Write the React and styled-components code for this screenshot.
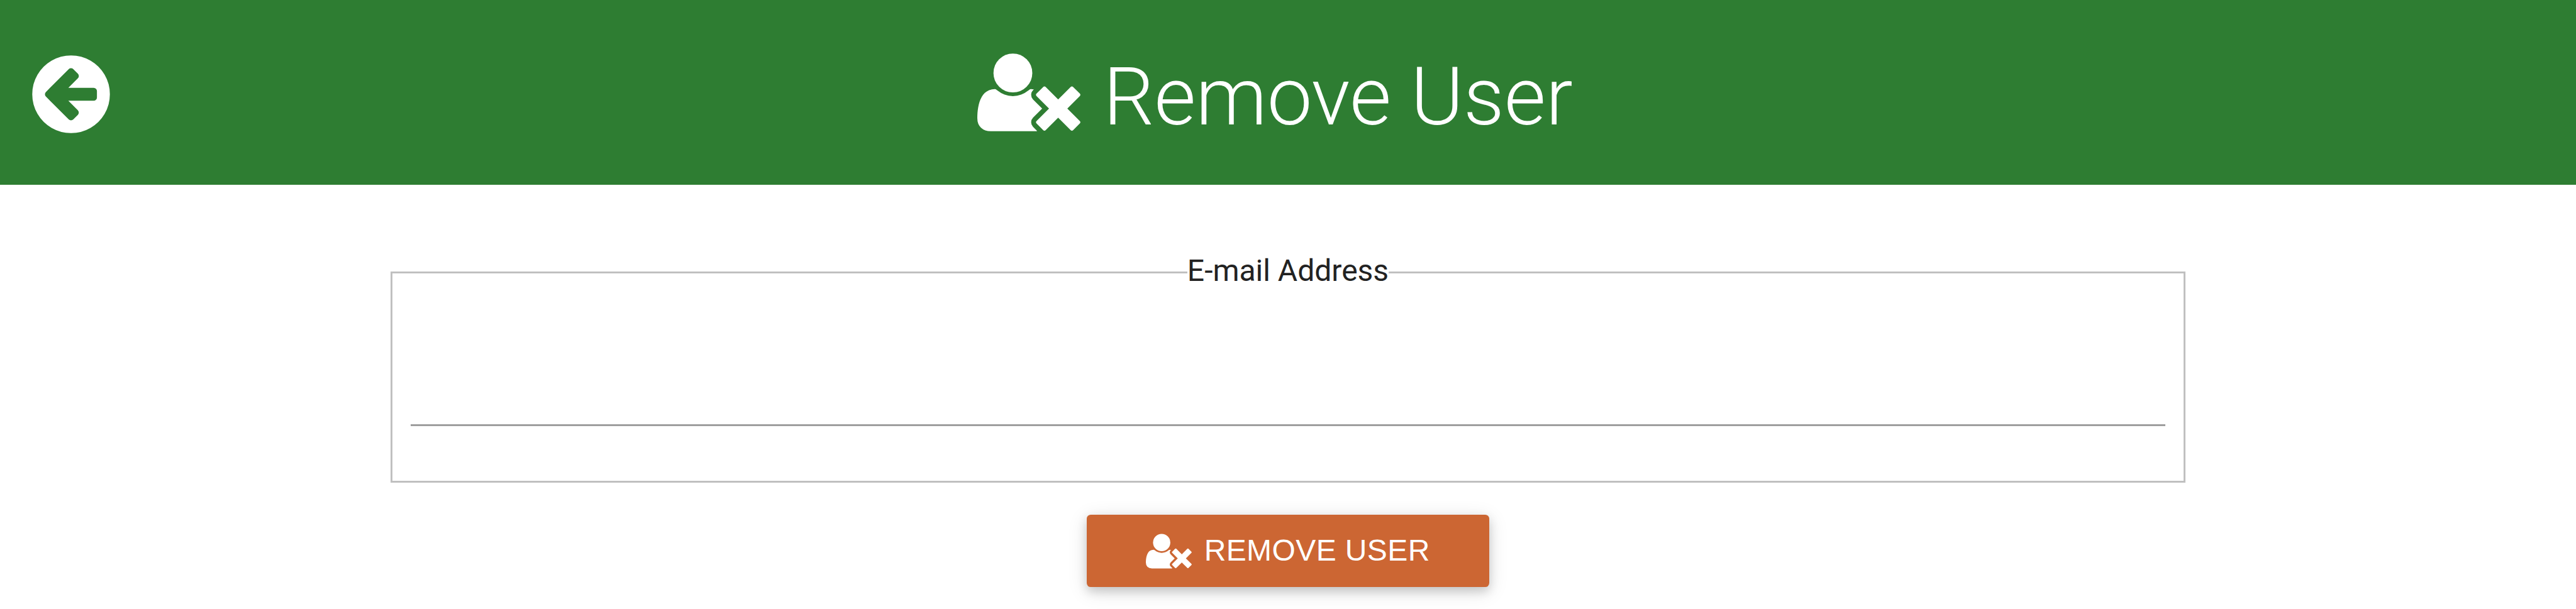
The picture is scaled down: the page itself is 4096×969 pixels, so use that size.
import React from "react";
import styled, { createGlobalStyle } from "styled-components";

const GlobalStyle = createGlobalStyle`
  *, *::before, *::after { box-sizing: border-box; }
  html, body { margin: 0; background: #fff; }
  body { font-family: Roboto, "Liberation Sans", sans-serif; color: #222; overflow: hidden; }
`;

const Page = styled.div`
  width: 4096px;
  height: 969px;
  display: flex;
  flex-direction: column;
  align-items: center;
`;

const Header = styled.header`
  width: 100%;
  height: 294.4px;
  flex: none;
  display: grid;
  grid-template-columns: 205px 1fr 205px;
  align-items: start;
  background: #2e7d32;
  color: #fff;
`;

const BackButton = styled.button`
  display: flex;
  margin: 78.3px 0 0 41.3px;
  padding: 0;
  border: 0;
  width: 144px;
  background: none;
  color: inherit;
`;

const Title = styled.h1`
  margin: 74.8px 0 0 1348.6px;
  display: flex;
  align-items: flex-start;
  gap: 36px;
  font-weight: 300;
  font-size: 128px;
  line-height: 159px;
  letter-spacing: -0.15px;
  white-space: nowrap;
`;

const Glyph = styled.svg`
  display: block;
  flex: none;
  height: ${(p) => p.$size}px;
  width: ${(p) => p.$size * p.$ratio}px;
  fill: currentColor;
`;

const Form = styled.form`
  width: 2854px;
  display: flex;
  flex-direction: column;
  align-items: center;
`;

const Field = styled.fieldset`
  width: 100%;
  height: 364px;
  margin: 109.6px 0 0;
  padding: 0 29px;
  border: 3px solid #c0c0c0;
`;

const Legend = styled.legend`
  margin: 0 auto;
  padding: 0 0 5px;
  font-size: 48px;
  line-height: 54px;
  text-align: center;
`;

const Input = styled.input`
  display: block;
  width: 100%;
  height: 215px;
  padding: 0;
  border: 0;
  border-bottom: 3px solid #9e9e9e;
  background: transparent;
  font: inherit;
  font-size: 48px;
  outline: none;
`;

const SubmitButton = styled.button`
  width: 640px;
  height: 115.2px;
  margin: 51.2px 0 0;
  padding: 25.4px 0 0 94px;
  display: flex;
  align-items: flex-start;
  gap: 19.5px;
  border: 0;
  border-radius: 6.4px;
  background: #cc6633;
  color: #fff;
  box-shadow: 0 6.4px 16px 0 rgba(0, 0, 0, 0.16), 0 6.4px 32px 0 rgba(0, 0, 0, 0.12);
  font-family: "Liberation Sans", sans-serif;
  font-size: 48px;
  line-height: 62px;
  letter-spacing: 0.4px;
  text-transform: uppercase;
  white-space: nowrap;
`;

const ArrowCircleLeft = ({ size }) => (
  <Glyph $size={size} $ratio={1} viewBox="0 0 1792 1792" aria-hidden="true">
    <path d="M1408 960v-128q0-26-19-45t-45-19h-502l189-189q19-19 19-45t-19-45l-91-91q-18-18-45-18t-45 18l-362 362-91 91q-18 18-18 45t18 45l91 91 362 362q18 18 45 18t45-18l91-91q18-18 18-45t-18-45l-189-189h502q26 0 45-19t19-45zm256-64q0 209-103 385.5t-279.5 279.5-385.5 103-385.5-103-279.5-279.5-103-385.5 103-385.5 279.5-279.5 385.5-103 385.5 103 279.5 279.5 103 385.5z" />
  </Glyph>
);

const UserTimes = ({ size }) => (
  <Glyph $size={size} $ratio={2048 / 1792} viewBox="0 0 2048 1792" aria-hidden="true">
    <path d="M704 896q-159 0-271.5-112.5t-112.5-271.5 112.5-271.5 271.5-112.5 271.5 112.5 112.5 271.5-112.5 271.5-271.5 112.5z" />
    <path d="M1781 1216l249 249q9 9 9 23 0 13-9 22l-136 136q-9 9-22 9-14 0-23-9l-249-249-249 249q-9 9-23 9-13 0-22-9l-136-136q-9-9-9-22 0-14 9-23l249-249-249-249q-9-9-9-23 0-13 9-22l136-136q9-9 22-9 14 0 23 9l249 249 249-249q9-9 23-9 13 0 22 9l136 136q9 9 9 22 0 14-9 23z" />
    <path d="M1283 1216l-181 181q-37 37-37 91 0 53 37 90l83 83q-21 3-44 3h-874q-121 0-194-69t-73-190q0-53 3.5-103.5t14-109 26.5-108.5 43-97.5 62-81 85.5-53.5 111.5-20q19 0 39 17 79 61 154.5 91.5t164.5 30.5 164.5-30.5 154.5-91.5q20-17 39-17 28 0 57 6-28 27-41 50t-13 56q0 54 37 91z" />
  </Glyph>
);

export default function App() {
  return (
    <Page>
      <GlobalStyle />
      <Header>
        <BackButton type="button" aria-label="Back">
          <ArrowCircleLeft size={144} />
        </BackButton>
        <Title>
          <UserTimes size={144} />
          <span>Remove User</span>
        </Title>
      </Header>
      <Form>
        <Field>
          <Legend>E-mail Address</Legend>
          <Input type="email" aria-label="E-mail Address" />
        </Field>
        <SubmitButton type="button">
          <UserTimes size={64} />
          <span>Remove User</span>
        </SubmitButton>
      </Form>
    </Page>
  );
}
